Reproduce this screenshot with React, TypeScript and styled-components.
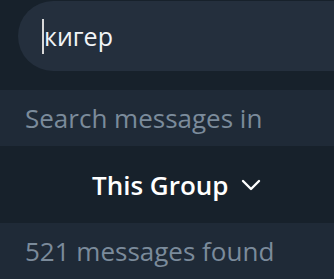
import React from "react";
import styled, { createGlobalStyle } from "styled-components";

const Global = createGlobalStyle`
  html, body { margin: 0; padding: 0; background: #17212b; }
  body { font-family: "Open Sans", "Noto Sans", sans-serif; overflow: hidden; }
`;

const Page = styled.div`
  width: 334px;
  height: 279px;
  background: #17212b;
  display: flex;
  flex-direction: column;
`;

const SearchArea = styled.div`
  height: 90px;
  padding-top: 1px;
  box-sizing: border-box;
  display: flex;
`;

const Pill = styled.div`
  margin-left: 18px;
  flex: 1;
  height: 70px;
  background: #242f3d;
  border-radius: 35px 0 0 35px;
  display: flex;
  align-items: center;
  padding-left: 24px;
`;

const Caret = styled.span`
  display: inline-block;
  width: 2px;
  height: 35px;
  background: #d8d8d8;
`;

const Query = styled.span`
  font-size: 25px;
  color: #f1f4f7;
  line-height: 1;
`;

const SectionHeader = styled.div`
  height: 56px;
  background: #1f2a37;
  display: flex;
  align-items: center;
  padding-left: 25px;
  font-size: 26px;
  color: #7b8b9b;
`;

const ScopeRow = styled.div`
  height: 77px;
  display: flex;
  align-items: center;
  padding-left: 92px;
  gap: 12px;
  font-size: 26px;
  font-weight: 600;
  color: #ffffff;
`;

const Footer = styled.div`
  flex: 1;
  background: #1f2a37;
  display: flex;
  align-items: center;
  padding-left: 25px;
  font-size: 26px;
  color: #7b8b9b;
`;

const Chevron = () => (
  <svg width="20" height="12" viewBox="0 0 20 12" fill="none">
    <path d="M2 2 L10 10 L18 2" stroke="#ffffff" strokeWidth="2.4" strokeLinecap="round" strokeLinejoin="round" />
  </svg>
);

export default function App() {
  return (
    <>
      <Global />
      <Page>
        <SearchArea>
          <Pill>
            <Caret />
            <Query>кигер</Query>
          </Pill>
        </SearchArea>
        <SectionHeader>Search messages in</SectionHeader>
        <ScopeRow>
          <span>This Group</span>
          <Chevron />
        </ScopeRow>
        <Footer>521 messages found</Footer>
      </Page>
    </>
  );
}
